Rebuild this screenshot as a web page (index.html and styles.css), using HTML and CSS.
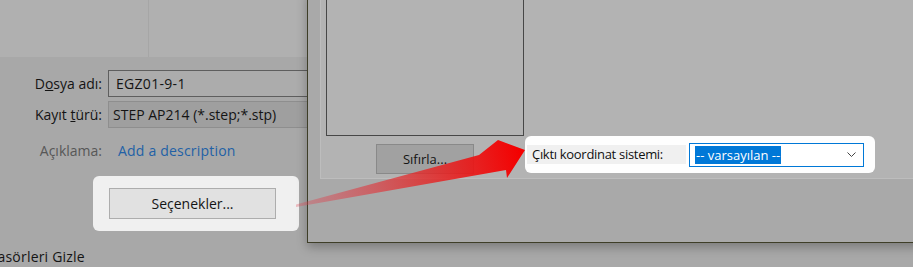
FILE: index.html
```html
<!DOCTYPE html>
<html lang="tr">
<head>
    <title>Farklı Kaydet</title>
    <link rel="stylesheet" href="styles.css">
</head>
<body>
    <div class="save-dialog">
        <div class="browse-area">
            <div class="nav-pane"></div>
            <div class="file-pane"></div>
        </div>
        <div class="form-area">
            <div class="form_row">
                <label for="filename" class="form_label">D<u>o</u>sya adı:</label>
                <div class="form_input" id="filename">EGZ01-9-1</div>
            </div>
            <div class="form_row">
                <label class="form_label">Kayıt <u>t</u>ürü:</label>
                <div class="form_select">STEP AP214 (*.step;*.stp)</div>
            </div>
            <div class="form_row desc-row">
                <span class="form_label muted">Açıklama:</span>
                <a class="desc-link">Add a description</a>
            </div>
            <div class="highlight options-box">
                <button type="button" class="win-button options-button">Seçenekler...</button>
            </div>
            <div class="hide-folders">Klasörleri Gizle</div>
        </div>
    </div>

    <div class="options-dialog">
        <div class="group-box">
            <div class="list-column">
                <div class="list-box"></div>
                <button type="button" class="win-button reset-button">Sıfırla...</button>
            </div>
            <div class="highlight coord-box">
                <span class="coord-label">Çıktı koordinat sistemi:</span>
                <div class="coord-select">
                    <span class="selected-text">-- varsayılan --</span>
                    <svg class="chevron" width="9" height="5" viewBox="0 0 9 5">
                        <path d="M0.5 0.5 L4.5 4.5 L8.5 0.5" fill="none" stroke="#444" stroke-width="1"/>
                    </svg>
                </div>
            </div>
        </div>
    </div>

    <svg class="arrow" width="913" height="267" viewBox="0 0 913 267">
        <defs>
            <linearGradient id="arrowFade" gradientUnits="userSpaceOnUse" x1="296" y1="206" x2="520" y2="152">
                <stop offset="0" stop-color="#e04050" stop-opacity="0.3"/>
                <stop offset="0.55" stop-color="#e22a2a" stop-opacity="0.8"/>
                <stop offset="1" stop-color="#f40000" stop-opacity="1"/>
            </linearGradient>
        </defs>
        <polygon points="296,204.5 479,155 498,140 525,150 507,178 506,170 296,207" fill="url(#arrowFade)"/>
    </svg>
</body>
</html>
```

FILE: styles.css
```css
html, body{
    margin: 0;
    padding: 0;
}
body{
    width: 913px;
    height: 267px;
    overflow: hidden;
    position: relative;
    background-color: #a8a8a8;
    font-family: "Open Sans", "Noto Sans", sans-serif;
    font-size: 14px;
    color: #141414;
}
.save-dialog{
    width: 913px;
}
.browse-area{
    display: flex;
    height: 57px;
    background-color: #b0b0b0;
}
.nav-pane{
    width: 148px;
    border-right: 1px solid #a6a6a6;
}
.file-pane{
    flex: 1;
}
.form-area{
    padding-top: 13px;
}
.form_row{
    display: flex;
    align-items: center;
    margin-bottom: 4px;
}
.form_label{
    width: 108px;
    text-align: right;
    padding-right: 6px;
    box-sizing: border-box;
}
.form_input,
.form_select{
    width: 260px;
    height: 27px;
    box-sizing: border-box;
    display: flex;
    align-items: center;
}
.form_input{
    border: 1px solid #5e5e5e;
    background-color: #acacac;
    padding-left: 7px;
    letter-spacing: 0.3px;
}
.form_select{
    border: 1px solid #8e8e8e;
    background-color: #9f9f9f;
    padding-left: 4px;
}
.desc-row{
    margin-top: 13px;
    margin-bottom: 0;
}
.muted{
    color: #575757;
}
.desc-link{
    color: #2261a6;
    padding-left: 10px;
    letter-spacing: 0.2px;
}
.highlight{
    background-color: #f0f0f0;
    border-radius: 6px;
}
.options-box{
    width: 206px;
    margin-left: 93px;
    margin-top: 16px;
    padding: 12px 0 12px 16px;
    box-sizing: border-box;
}
.win-button{
    font-family: inherit;
    font-size: 14px;
    color: #141414;
    background-color: #e1e1e1;
    border: 1px solid #adadad;
    padding: 0;
    cursor: pointer;
}
.options-button{
    width: 167px;
    height: 31px;
}
.hide-folders{
    margin-top: 16px;
    margin-left: -15px;
    letter-spacing: 0.2px;
}

/* options window on top */
.options-dialog{
    position: absolute;
    left: 307px;
    top: -10px;
    width: 620px;
    height: 253px;
    box-sizing: border-box;
    background-color: #a9a9a9;
    border-left: 1px solid #3e3e28;
    border-bottom: 1px solid #3e3e28;
    box-shadow: 0 4px 10px rgba(0, 0, 0, 0.28);
    padding-left: 12px;
    font-size: 13px;
}
.group-box{
    display: flex;
    height: 189px;
    box-sizing: border-box;
    background-color: #b3b3b3;
    border-left: 1px solid #bdbdbd;
    border-bottom: 1px solid #bdbdbd;
    padding-left: 5px;
}
.list-column{
    width: 198px;
    display: flex;
    flex-direction: column;
    align-items: center;
}
.list-box{
    width: 198px;
    height: 146px;
    box-sizing: border-box;
    border: 1px solid #474747;
    border-top: none;
}
.reset-button{
    margin-top: 8px;
    width: 98px;
    height: 30px;
    font-size: 13px;
    background-color: #a1a1a1;
    border-color: #898989;
}
.coord-box{
    align-self: flex-end;
    margin-bottom: 5px;
    margin-left: 1px;
    width: 350px;
    height: 37px;
    box-sizing: border-box;
    background-color: #fefefe;
    display: flex;
    align-items: center;
    padding-left: 2px;
}
.coord-label{
    background-color: #f0f0f0;
    width: 159px;
    height: 19px;
    line-height: 19px;
    padding-left: 5px;
    box-sizing: border-box;
    color: #111;
    letter-spacing: -0.3px;
}
.coord-select{
    margin-left: 3px;
    width: 175px;
    height: 24px;
    box-sizing: border-box;
    border: 1px solid #0078d7;
    background-color: #fff;
    display: flex;
    align-items: center;
    padding-left: 5px;
    padding-right: 7px;
}
.selected-text{
    background-color: #0078d7;
    color: #fff;
    line-height: 18px;
    padding: 0 1px;
}
.chevron{
    margin-left: auto;
}
.arrow{
    position: absolute;
    left: 0;
    top: 0;
    pointer-events: none;
}
```
